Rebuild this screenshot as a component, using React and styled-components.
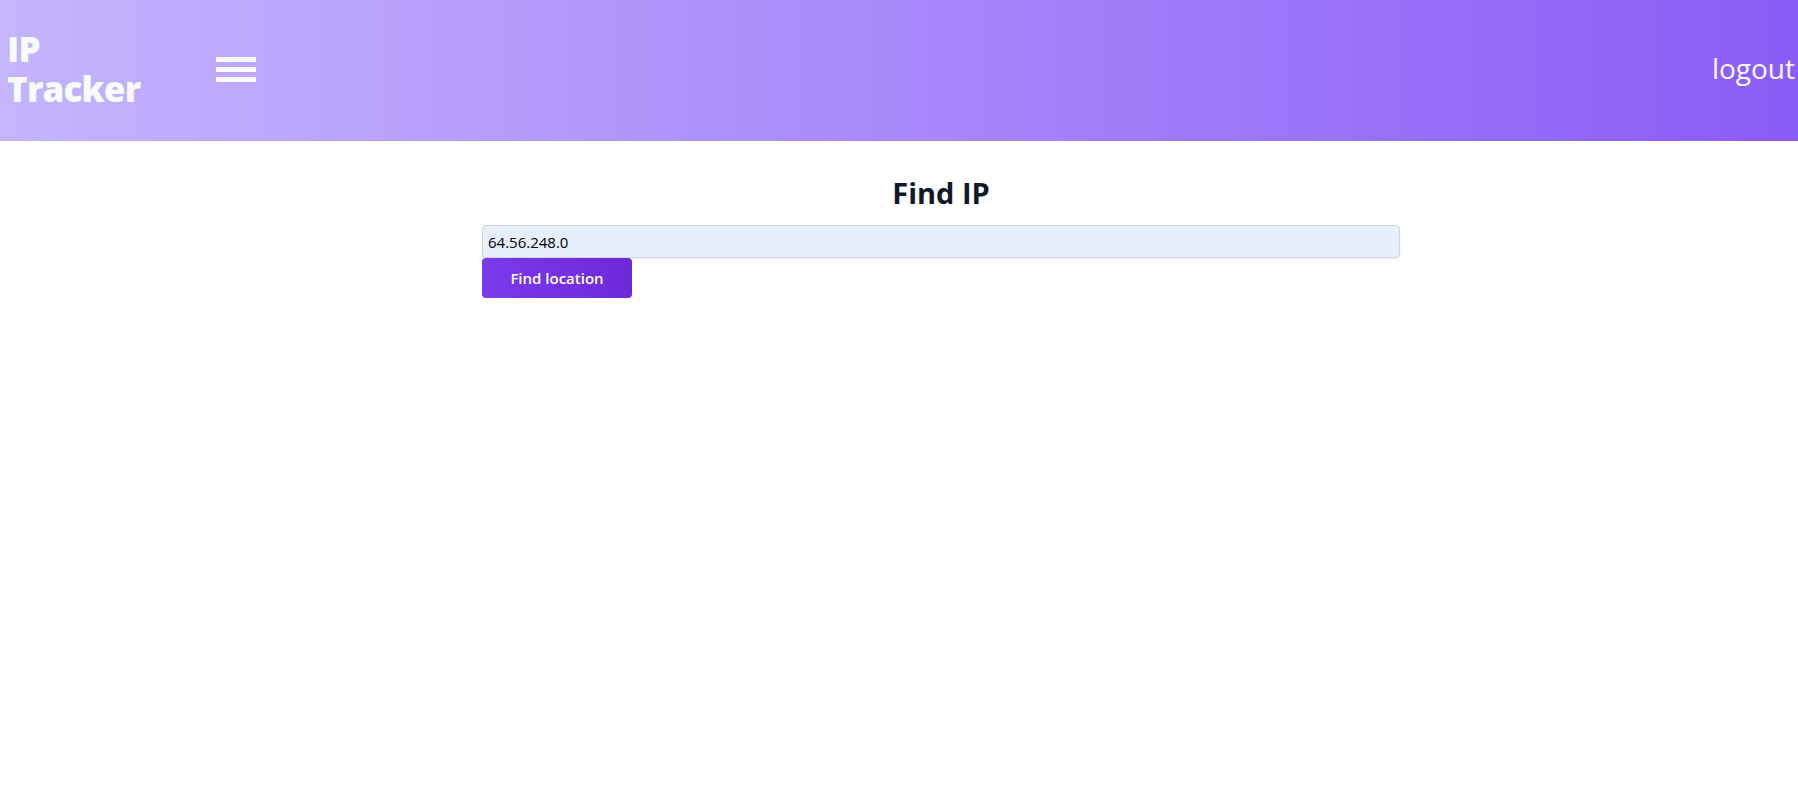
import React, { useState } from 'react';
import styled, { createGlobalStyle } from 'styled-components';

const GlobalStyle = createGlobalStyle`
    body {
        margin: 0;
        font-family: "Open Sans", "Noto Sans", sans-serif;
        background: #ffffff;
    }
`;

const Header = styled.header`
    display: flex;
    align-items: center;
    height: 141px;
    padding: 0 3px 0 7px;
    box-sizing: border-box;
    background: linear-gradient(to right, #c4b5fd, #8b5cf6);
    color: #f8fafc;
`;

const LogoBox = styled.div`
    width: 209px;
    margin-top: -4px;
`;

const Logo = styled.div`
    width: min-content;
    font-family: "Open Sans", sans-serif;
    font-weight: 800;
    font-size: 35px;
    line-height: 40px;
    letter-spacing: -0.8px;
`;

const MenuButton = styled.button`
    display: flex;
    flex-direction: column;
    gap: 5px;
    padding: 0;
    border: none;
    background: none;
    cursor: pointer;
    margin-top: -3px;
`;

const Bar = styled.span`
    display: block;
    width: 40px;
    height: 5px;
    background: #f8fafc;
`;

const Logout = styled.a`
    margin-left: auto;
    font-size: 28px;
    font-weight: 400;
    color: #f8fafc;
    cursor: pointer;
    margin-top: -5px;
`;

const Main = styled.main`
    display: flex;
    justify-content: center;
    padding: 32px 0 0 84px;
`;

const Form = styled.form`
    width: 918px;
    display: flex;
    flex-direction: column;
    align-items: flex-start;
`;

const Title = styled.h1`
    align-self: stretch;
    margin: 0 0 12px;
    text-align: center;
    font-size: 29px;
    line-height: 40px;
    font-weight: 700;
    color: #111827;
`;

const Input = styled.input`
    box-sizing: border-box;
    width: 100%;
    height: 33px;
    padding: 0 5px;
    font-family: inherit;
    font-size: 15px;
    color: #000;
    background: #e8effc;
    border: 1px solid #d1d5db;
    border-radius: 4px;
    box-shadow: 0 1px 2px rgba(0, 0, 0, 0.08);
    outline: none;
`;

const Submit = styled.button`
    width: 150px;
    height: 40px;
    border: none;
    border-radius: 4px;
    background: linear-gradient(to right, #7c3aed, #6d28d9);
    color: #ffffff;
    font-family: inherit;
    font-size: 15px;
    font-weight: 600;
    cursor: pointer;
`;

export default function App() {
    const [ip, setIp] = useState('64.56.248.0');

    return (
        <>
            <GlobalStyle />
            <Header>
                <LogoBox>
                    <Logo>IP Tracker</Logo>
                </LogoBox>
                <MenuButton aria-label="menu">
                    <Bar />
                    <Bar />
                    <Bar />
                </MenuButton>
                <Logout>logout</Logout>
            </Header>
            <Main>
                <Form onSubmit={(e) => e.preventDefault()}>
                    <Title>Find IP</Title>
                    <Input value={ip} onChange={(e) => setIp(e.target.value)} />
                    <Submit type="submit">Find location</Submit>
                </Form>
            </Main>
        </>
    );
}
